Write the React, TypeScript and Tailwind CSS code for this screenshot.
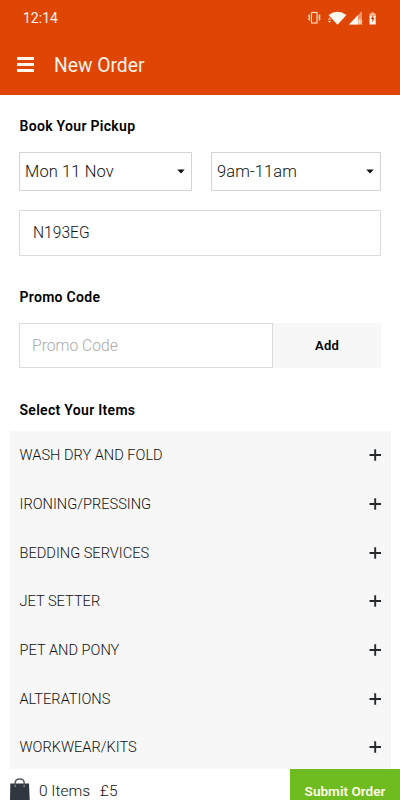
const services = [
  'WASH DRY AND FOLD',
  'IRONING/PRESSING',
  'BEDDING SERVICES',
  'JET SETTER',
  'PET AND PONY',
  'ALTERATIONS',
  'WORKWEAR/KITS',
];

function StatusIcons() {
  return (
    <svg width="72" height="16" viewBox="0 0 72 16" className="mr-[20px]" fill="#fff8ee">
      <g fill="none" stroke="#ffe3cd">
        <rect x="3.500" y="2.500" width="5.500" height="10.500" strokeWidth="1.100" />
        <path d="M1.700 4.500.7 6l1 1.500-1 1.500 1 1.500M10.900 4.500l1 1.500-1 1.500 1 1.500-1 1.500" strokeWidth="1.300" />
      </g>
      <path d="M20.500 5Q29.300-1.400 38.500 5L29.500 14.800z" />
      <path d="M20 9.500 21.500 7.800 23 9.500zM20 11h3l-1.500 1.800z" />
      <path d="M41 14.500 54 1v13.500z" opacity=".45" />
      <path d="M41 14.500 50 5v4h.1v5.500z" />
      <path d="M51.200 14.500v-4.500h1.500q1.100 0 1.100 1.200t-1.100 1.200h-1.500m1.300 0 1.400 2.100" fill="none" stroke="#fff0df" strokeWidth="1" />
      <path d="M61.500 3.500h1.900V2.200h2.400v1.300h1.900v3h-6.200z" opacity=".65" />
      <path d="M61.500 6h6.200v8.500h-6.200z" />
      <path d="M65.300 4.800 62.900 9h1.500v3.500l2.200-4.400h-1.300z" fill="#c94105" />
    </svg>
  );
}

function Heading({ children }: { children: string }) {
  return <h2 className="h-5 pl-[0.5px] text-[14px] leading-5 font-semibold tracking-[0.3px] text-black">{children}</h2>;
}

function Select({ value, className }: { value: string; className: string }) {
  return (
    <button className={`flex h-[39px] items-center justify-between border border-[#d5d5d5] bg-white pr-[6px] pl-[5px] text-left ${className}`}>
      <span className="mt-px text-[16.500px] leading-5 font-light tracking-[0.1px]">{value}</span>
      <svg width="8" height="5" viewBox="0 0 8 5"><path d="M.3.4h7.400L4.500 4.100q-.5.500-1 0z" fill="#111" /></svg>
    </button>
  );
}

function Plus() {
  return (
    <svg width="12" height="12" viewBox="0 0 12 12" className="mr-[10px]">
      <path d="M6.200.3v11.400M.5 6h11.500" stroke="#252a2e" strokeWidth="1.900" />
    </svg>
  );
}

export default function App() {
  return (
    <div className="flex h-[800px] w-[400px] flex-col overflow-hidden bg-white font-['Roboto','Liberation_Sans',sans-serif] text-[#111]">
      <header className="h-[95px] shrink-0 bg-[#df4504] text-[#fff3e7]">
        <div className="flex h-9 items-center justify-between pl-[23px]">
          <span className="text-[14px] leading-5">12:14</span>
          <StatusIcons />
        </div>
        <div className="flex h-[57px] items-center pl-[17px]">
          <svg width="17" height="15" viewBox="0 0 17 15"><path d="M0 1.500h17M0 7.500h17M0 13.500h17" stroke="#fff5e9" strokeWidth="2.800" /></svg>
          <h1 className="mt-[2px] ml-5 text-[19.300px] leading-6 font-normal">New Order</h1>
        </div>
      </header>
      <main className="min-h-0 flex-1 overflow-hidden">
        <section className="mr-[19px] ml-[19px] pt-[21px]">
          <Heading>Book Your Pickup</Heading>
          <div className="mt-4 flex justify-between">
            <Select value="Mon 11 Nov" className="w-[173px]" />
            <Select value="9am-11am" className="w-[170px]" />
          </div>
          <div className="mt-[19px] flex h-[46px] items-center border border-[#dadada] pt-[2px] pl-[13px] text-[15.600px] font-light">N193EG</div>
        </section>
        <section className="mx-[19px] mt-[31px]">
          <Heading>Promo Code</Heading>
          <div className="mt-4 flex h-[45px]">
            <div className="flex flex-1 items-center border border-[#dadada] pl-3 text-[15.700px] font-light text-[#aaa]">Promo Code</div>
            <button className="w-[108px] bg-[#f7f7f7] text-[13px] font-semibold tracking-[0.2px] text-black">Add</button>
          </div>
        </section>
        <section className="mt-8">
          <div className="pl-[19px]"><Heading>Select Your Items</Heading></div>
          <ul className="mt-[11px] mr-[9px] ml-[10px] bg-[#f7f7f7]">
            {services.map((name) => (
              <li key={name} className="flex h-[48.650px] items-center justify-between pl-[9.500px] text-[14.600px] font-light">
                <span className="pt-[2px]">{name}</span>
                <Plus />
              </li>
            ))}
          </ul>
        </section>
      </main>
      <footer className="flex h-[31px] shrink-0 items-start justify-between overflow-hidden bg-white">
        <div className="flex pl-[10px]">
          <svg width="20" height="22" viewBox="0 0 20 22" className="mt-[9px]">
            <path d="M.300 5.500h18.700l.7 16.500H0z" fill="#303740" />
            <path d="M5.200 8V5.200Q5.200 1 9.700 1t4.500 4.200V8" fill="none" stroke="#555b62" strokeWidth="1.500" />
            <path d="M4.500 8.300h1.400M13.500 8.300h1.400" stroke="#8b9096" strokeWidth="1.300" />
          </svg>
          <span className="mt-3 ml-[9px] text-[15.500px] leading-5 font-light">0 Items</span>
          <span className="mt-3 ml-[10px] text-[15.500px] leading-5 font-light">£5</span>
        </div>
        <button className="h-12 w-[110px] bg-[#6fbc20] pb-[3px] text-[13.600px] font-semibold text-[#fffde9]">Submit Order</button>
      </footer>
    </div>
  );
}
